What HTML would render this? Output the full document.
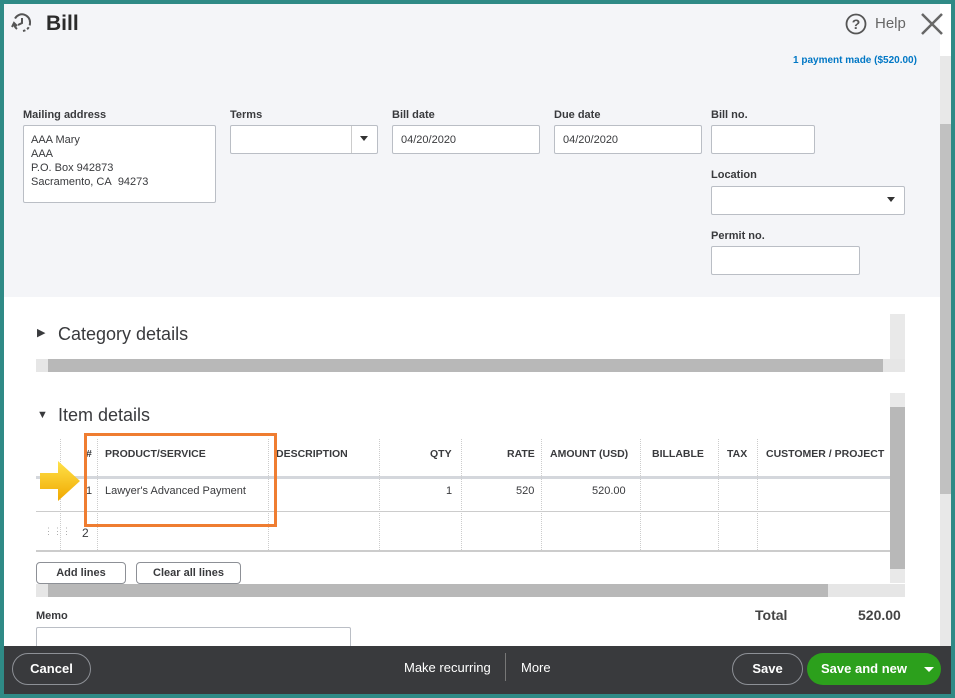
<!DOCTYPE html>
<html><head><style>
*{box-sizing:border-box;margin:0;padding:0}
body{width:955px;height:698px;overflow:hidden;background:#2f8a86;font-family:"Liberation Sans",Arial,sans-serif;color:#393a3d;position:relative}
.a{position:absolute}
.win{left:4px;top:4px;width:947px;height:690px;background:#fff;overflow:hidden}
.top{left:0;top:0;width:936px;height:293px;background:#f4f5f8}
.lbl{font-size:11px;font-weight:bold;color:#393a3d}
.inp{background:#fff;border:1px solid #babec5;border-radius:2px;font-size:11px;padding:8px}
.th{font-size:10.5px;font-weight:bold;top:444px}
.btn{border:1px solid #8d9096;border-radius:4px;background:#fff;font-size:11px;font-weight:bold;text-align:center;line-height:20px;height:22px}
.vl{width:1px;border-left:1px dotted #ccc}
</style></head><body>
<div class="a win">
 <div class="a top"></div>
 <svg class="a" style="left:6px;top:7px" width="24" height="24" viewBox="0 0 24 24" fill="none" stroke="#555" stroke-width="2"><path d="M5 7.5A8 8 0 0 1 20 12" /><path d="M20 12a8 8 0 0 1-8 8" stroke-dasharray="2.5 2"/><path d="M4 12a8 8 0 0 0 3 6"/><path d="M12 7v5l-4 2"/><path d="M2 16l2-4 3 3"/></svg>
 <div class="a" style="left:42px;top:8px;font-size:21px;font-weight:bold;color:#2b2b2b">Bill</div>
 <svg class="a" style="left:841px;top:9px" width="22" height="22" viewBox="0 0 22 22"><circle cx="11" cy="11" r="9.5" fill="none" stroke="#555" stroke-width="1.8"/><text x="11" y="16" font-size="14" font-weight="bold" text-anchor="middle" fill="#555" font-family="Liberation Sans">?</text></svg>
 <div class="a" style="left:871px;top:11px;font-size:15px;color:#666">Help</div>
 <svg class="a" style="left:916px;top:8px" width="24" height="24" viewBox="0 0 24 24"><path d="M2 2L22 22M22 2L2 22" stroke="#666" stroke-width="2.5"/></svg>
 <div class="a" style="left:789px;top:51px;font-size:10px;font-weight:bold;color:#0077c5">1 payment made ($520.00)</div>

 <div class="a lbl" style="left:19px;top:105px">Mailing address</div>
 <div class="a inp" style="left:19px;top:121px;width:193px;height:78px;padding:7px;line-height:14px">AAA Mary<br>AAA<br>P.O. Box 942873<br>Sacramento, CA&nbsp; 94273</div>
 <div class="a lbl" style="left:226px;top:105px">Terms</div>
 <div class="a inp" style="left:226px;top:121px;width:148px;height:29px"></div>
 <div class="a" style="left:347px;top:122px;width:1px;height:27px;background:#ccc"></div>
 <div class="a" style="left:356px;top:132px;border:4px solid transparent;border-top:5px solid #333"></div>
 <div class="a lbl" style="left:388px;top:105px">Bill date</div>
 <div class="a inp" style="left:388px;top:121px;width:148px;height:29px">04/20/2020</div>
 <div class="a lbl" style="left:550px;top:105px">Due date</div>
 <div class="a inp" style="left:550px;top:121px;width:148px;height:29px">04/20/2020</div>
 <div class="a lbl" style="left:707px;top:105px">Bill no.</div>
 <div class="a inp" style="left:707px;top:121px;width:104px;height:29px"></div>
 <div class="a lbl" style="left:707px;top:165px">Location</div>
 <div class="a inp" style="left:707px;top:182px;width:194px;height:29px"></div>
 <div class="a" style="left:883px;top:193px;border:4px solid transparent;border-top:5px solid #333"></div>
 <div class="a lbl" style="left:707px;top:226px">Permit no.</div>
 <div class="a inp" style="left:707px;top:242px;width:149px;height:29px"></div>

 <div class="a" style="left:936px;top:52px;width:11px;height:593px;background:#e8e8e8"></div>
 <div class="a" style="left:936px;top:120px;width:11px;height:370px;background:#c1c1c1"></div>

 <div class="a" style="left:33px;top:322px;font-size:11px">&#9654;</div>
 <div class="a" style="left:54px;top:320px;font-size:18px">Category details</div>
 <div class="a" style="left:886px;top:310px;width:15px;height:45px;background:#e9e9e9"></div>
 <div class="a" style="left:32px;top:355px;width:869px;height:13px;background:#e6e6e6"></div>
 <div class="a" style="left:44px;top:355px;width:835px;height:13px;background:#b8b8b8"></div>

 <div class="a" style="left:33px;top:405px;font-size:11px">&#9660;</div>
 <div class="a" style="left:54px;top:401px;font-size:18px">Item details</div>
 <div class="a" style="left:886px;top:389px;width:15px;height:190px;background:#e9e9e9"></div>
 <div class="a" style="left:886px;top:403px;width:15px;height:162px;background:#b8b8b8"></div>

 <div class="a" style="left:32px;top:472px;width:854px;height:3px;background:#d4d7dc"></div>
 <div class="a" style="left:32px;top:507px;width:854px;height:1px;background:#ccc"></div>
 <div class="a" style="left:32px;top:546px;width:854px;height:2px;background:#ccc"></div>
 <div class="a vl" style="left:56px;top:435px;height:111px"></div>
 <div class="a vl" style="left:93px;top:435px;height:111px"></div>
 <div class="a vl" style="left:264px;top:435px;height:111px"></div>
 <div class="a vl" style="left:375px;top:435px;height:111px"></div>
 <div class="a vl" style="left:457px;top:435px;height:111px"></div>
 <div class="a vl" style="left:537px;top:435px;height:111px"></div>
 <div class="a vl" style="left:636px;top:435px;height:111px"></div>
 <div class="a vl" style="left:714px;top:435px;height:111px"></div>
 <div class="a vl" style="left:753px;top:435px;height:111px"></div>
 <div class="a th" style="left:82px">#</div>
 <div class="a th" style="left:101px">PRODUCT/SERVICE</div>
 <div class="a th" style="left:272px">DESCRIPTION</div>
 <div class="a th" style="left:426px">QTY</div>
 <div class="a th" style="left:503px">RATE</div>
 <div class="a th" style="left:546px">AMOUNT (USD)</div>
 <div class="a th" style="left:648px">BILLABLE</div>
 <div class="a th" style="left:723px">TAX</div>
 <div class="a th" style="left:762px">CUSTOMER / PROJECT</div>
 <div class="a" style="left:101px;top:481px;font-size:11px">Lawyer's Advanced Payment</div>
 <div class="a" style="left:82px;top:481px;font-size:11px">1</div>
 <div class="a" style="left:442px;top:481px;font-size:11px">1</div>
 <div class="a" style="left:512px;top:481px;font-size:11px">520</div>
 <div class="a" style="left:588px;top:481px;font-size:11px">520.00</div>
 <div class="a" style="left:40px;top:522px;font-size:9px;color:#aaa">&#8942;&#8942;&#8942;</div>
 <div class="a" style="left:78px;top:522px;font-size:12px">2</div>
 <div class="a" style="left:80px;top:429px;width:193px;height:94px;border:3px solid #ef7d31"></div>
 <svg class="a" style="left:34px;top:455px" width="46" height="44" viewBox="0 0 46 44"><defs><linearGradient id="g" x1="0" y1="0" x2="0" y2="1"><stop offset="0" stop-color="#ffe24a"/><stop offset="1" stop-color="#f0a800"/></linearGradient></defs><path d="M2 14h18V2l22 20-22 20V30H2z" fill="url(#g)"/></svg>

 <div class="a btn" style="left:32px;top:558px;width:90px">Add lines</div>
 <div class="a btn" style="left:132px;top:558px;width:105px">Clear all lines</div>
 <div class="a" style="left:32px;top:580px;width:869px;height:13px;background:#e6e6e6"></div>
 <div class="a" style="left:44px;top:580px;width:780px;height:13px;background:#b8b8b8"></div>

 <div class="a lbl" style="left:32px;top:606px">Memo</div>
 <div class="a inp" style="left:32px;top:623px;width:315px;height:30px"></div>
 <div class="a" style="left:751px;top:603px;font-size:14px;font-weight:bold;color:#444">Total</div>
 <div class="a" style="left:854px;top:603px;font-size:14px;font-weight:bold;color:#444">520.00</div>

 <div class="a" style="left:0;top:642px;width:947px;height:48px;background:#393a3d"></div>
 <div class="a" style="left:8px;top:649px;width:79px;height:32px;border:1px solid #8d9096;border-radius:16px;color:#fff;font-size:13px;font-weight:bold;text-align:center;line-height:30px">Cancel</div>
 <div class="a" style="left:400px;top:656px;color:#fff;font-size:13px">Make recurring</div>
 <div class="a" style="left:501px;top:649px;width:1px;height:28px;background:#777"></div>
 <div class="a" style="left:517px;top:656px;color:#fff;font-size:13px">More</div>
 <div class="a" style="left:728px;top:649px;width:71px;height:32px;border:1px solid #8d9096;border-radius:16px;color:#fff;font-size:13px;font-weight:bold;text-align:center;line-height:30px">Save</div>
 <div class="a" style="left:803px;top:649px;width:134px;height:32px;background:#2ca01c;border-radius:16px;color:#fff;font-size:13px;font-weight:bold;line-height:32px;padding-left:14px">Save and new</div>
 <div class="a" style="left:920px;top:663px;border:5px solid transparent;border-top:5px solid #fff"></div>
</div>
</body></html>
